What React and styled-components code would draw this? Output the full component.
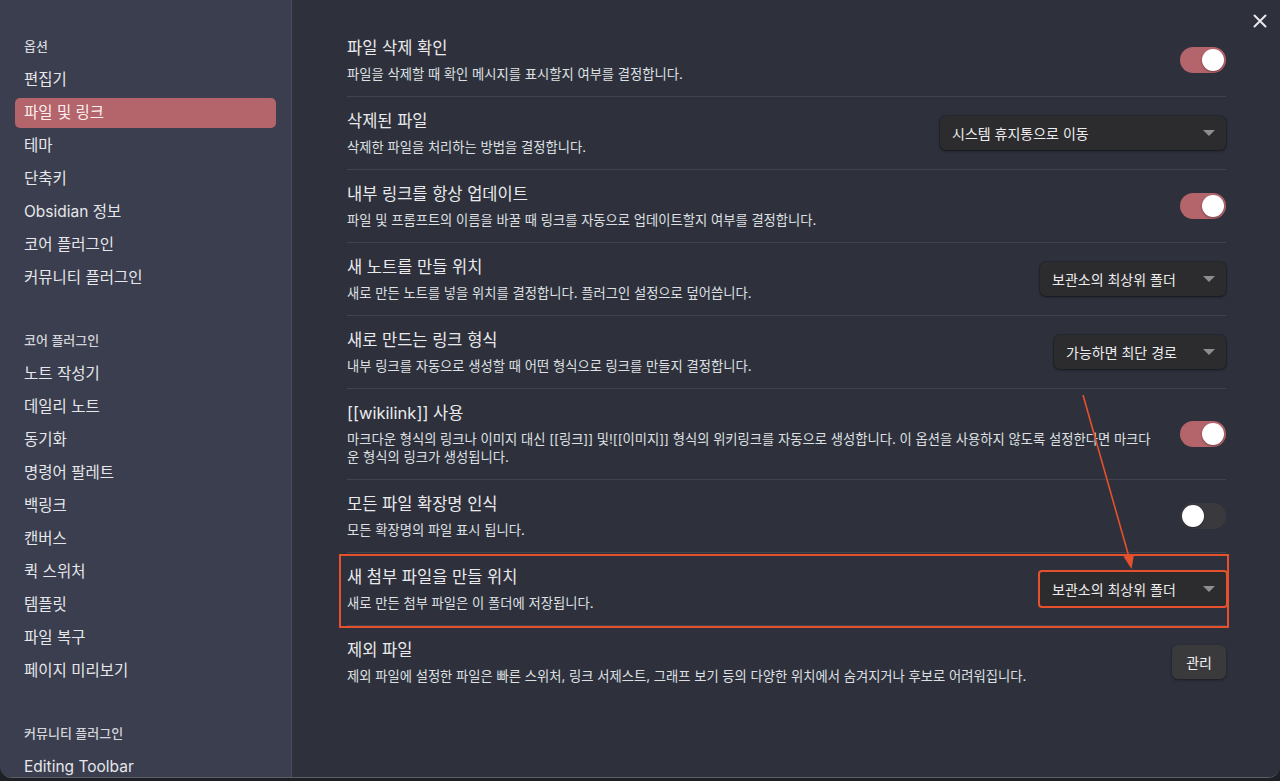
import React from "react";
import styled, { createGlobalStyle, css } from "styled-components";

const GlobalStyle = createGlobalStyle`
  html, body { margin: 0; padding: 0; background: #1f2025; }
  body {
    font-family: "Inter", "Noto Sans CJK KR", sans-serif;
    -webkit-font-smoothing: antialiased;
  }
  * { box-sizing: border-box; }
`;

const Stage = styled.div`
  position: relative;
  width: 1280px;
  height: 781px;
  overflow: hidden;
  background: #1f2025;
`;

const Window = styled.div`
  display: grid;
  grid-template-columns: 292px 1fr;
  width: 1280px;
  height: 778px;
  border-radius: 0 0 12px 12px;
  border-bottom: 1px solid #5c5e66;
  overflow: hidden;
  position: relative;
`;

const Sidebar = styled.nav`
  background: #3a3e4e;
  border-right: 1px solid #4a4e5d;
  padding: 34px 15px 0 15px;
  display: flex;
  flex-direction: column;
  overflow: hidden;
`;

const Group = styled.div`
  display: flex;
  flex-direction: column;
  gap: 3px;
  & + & { margin-top: 35px; }
`;

const GroupHeading = styled.div`
  font-size: 13px;
  line-height: 24px;
  padding-left: 9px;
  color: #d4d5da;
  font-weight: 500;
  margin-bottom: 4px;
`;

const NavItem = styled.div`
  height: 30px;
  line-height: 30px;
  padding-left: 9px;
  font-size: 15.5px;
  color: #e6e7ea;
  border-radius: 5px;
  white-space: nowrap;
  ${(p) =>
    p.$active &&
    css`
      background: #b4646b;
      color: #fbeeee;
    `}
`;

const Main = styled.main`
  background: #2e313c;
  padding: 24px 54px 0 55px;
  position: relative;
`;

const Row = styled.div`
  position: relative;
  display: flex;
  align-items: center;
  gap: 24px;
  padding: 12px 0 13px;
  & + & { border-top: 1px solid #41444f; }
`;

const Info = styled.div`
  flex: 1;
  min-width: 0;
`;

const Title = styled.div`
  font-size: 16.5px;
  line-height: 24px;
  color: #eaeaec;
`;

const Desc = styled.div`
  margin-top: 5px;
  font-size: 13.3px;
  line-height: 18px;
  color: #dfe0e3;
`;

const Toggle = styled.div`
  flex: none;
  width: 46px;
  height: 26px;
  border-radius: 13px;
  background: ${(p) => (p.$on ? "#b4646b" : "#3a3a3e")};
  position: relative;
  &::after {
    content: "";
    position: absolute;
    top: 2px;
    left: ${(p) => (p.$on ? "22px" : "2px")};
    width: 22px;
    height: 22px;
    border-radius: 50%;
    background: #ffffff;
    box-shadow: 0 1px 2px rgba(0, 0, 0, 0.35);
  }
`;

const Select = styled.div`
  flex: none;
  display: flex;
  align-items: center;
  justify-content: space-between;
  height: 34px;
  width: ${(p) => p.$w}px;
  padding: 0 11px 0 12px;
  border-radius: 6px;
  background: #2c2c2f;
  box-shadow: 0 1px 3px rgba(0, 0, 0, 0.45), 0 0 0 1px rgba(0, 0, 0, 0.15);
  font-size: 14px;
  color: #ececee;
  white-space: nowrap;
  ${(p) =>
    p.$marked &&
    css`
      box-shadow: none;
      border-radius: 2px;
      outline: 2px solid #e5502d;
      outline-offset: 0;
    `}
`;

const Caret = styled.span`
  width: 0;
  height: 0;
  border-left: 6px solid transparent;
  border-right: 6px solid transparent;
  border-top: 6px solid #8d8d92;
`;

const Button = styled.div`
  flex: none;
  height: 34px;
  padding: 0 14px;
  display: flex;
  align-items: center;
  border-radius: 6px;
  background: #3a3a3c;
  box-shadow: 0 1px 3px rgba(0, 0, 0, 0.45);
  font-size: 14px;
  color: #eeeeef;
`;

const HighlightBox = styled.div`
  position: absolute;
  top: 1px;
  bottom: -3px;
  left: -8px;
  right: -3px;
  border: 2px solid #e5502d;
  pointer-events: none;
`;

const Close = styled.div`
  position: absolute;
  top: 13px;
  right: 12px;
  width: 16px;
  height: 16px;
  color: #e8e8ea;
`;

const Overlay = styled.svg`
  position: absolute;
  left: 0;
  top: 0;
  pointer-events: none;
`;

const sections = [
  { heading: "옵션", items: ["편집기", "파일 및 링크", "테마", "단축키", "Obsidian 정보", "코어 플러그인", "커뮤니티 플러그인"], active: "파일 및 링크" },
  { heading: "코어 플러그인", items: ["노트 작성기", "데일리 노트", "동기화", "명령어 팔레트", "백링크", "캔버스", "퀵 스위처", "템플릿", "파일 복구", "페이지 미리보기"] },
  { heading: "커뮤니티 플러그인", items: ["Editing Toolbar"] },
];

const rows = [
  { title: "파일 삭제 확인", desc: "파일을 삭제할 때 확인 메시지를 표시할지 여부를 결정합니다.", control: { type: "toggle", on: true } },
  { title: "삭제된 파일", desc: "삭제한 파일을 처리하는 방법을 결정합니다.", control: { type: "select", value: "시스템 휴지통으로 이동", w: 286 } },
  { title: "내부 링크를 항상 업데이트", desc: "파일 및 프롬프트의 이름을 바꿀 때 링크를 자동으로 업데이트할지 여부를 결정합니다.", control: { type: "toggle", on: true } },
  { title: "새 노트를 만들 위치", desc: "새로 만든 노트를 넣을 위치를 결정합니다. 플러그인 설정으로 덮어씁니다.", control: { type: "select", value: "보관소의 최상위 폴더", w: 186 } },
  { title: "새로 만드는 링크 형식", desc: "내부 링크를 자동으로 생성할 때 어떤 형식으로 링크를 만들지 결정합니다.", control: { type: "select", value: "가능하면 최단 경로", w: 172 } },
  { title: "[[wikilink]] 사용", desc: "마크다운 형식의 링크나 이미지 대신 [[링크]] 및![[이미지]] 형식의 위키링크를 자동으로 생성합니다. 이 옵션을 사용하지 않도록 설정한다면 마크다운 형식의 링크가 생성됩니다.", control: { type: "toggle", on: true } },
  { title: "모든 파일 확장명 인식", desc: "모든 확장명의 파일 표시 됩니다.", control: { type: "toggle", on: false } },
  { title: "새 첨부 파일을 만들 위치", desc: "새로 만든 첨부 파일은 이 폴더에 저장됩니다.", control: { type: "select", value: "보관소의 최상위 폴더", w: 186, marked: true }, marked: true },
  { title: "제외 파일", desc: "제외 파일에 설정한 파일은 빠른 스위처, 링크 서제스트, 그래프 보기 등의 다양한 위치에서 숨겨지거나 후보로 어려워집니다.", control: { type: "button", label: "관리" } },
];

function Control({ c }) {
  if (c.type === "toggle") return <Toggle $on={c.on} />;
  if (c.type === "select")
    return (
      <Select $w={c.w} $marked={c.marked}>
        <span>{c.value}</span>
        <Caret />
      </Select>
    );
  return <Button>{c.label}</Button>;
}

export default function App() {
  return (
    <>
      <GlobalStyle />
      <Stage>
        <Window>
          <Sidebar>
            {sections.map((s) => (
              <Group key={s.heading}>
                <GroupHeading>{s.heading}</GroupHeading>
                {s.items.map((it) => (
                  <NavItem key={it} $active={it === s.active}>
                    {it}
                  </NavItem>
                ))}
              </Group>
            ))}
          </Sidebar>
          <Main>
            {rows.map((r) => (
              <Row key={r.title}>
                <Info>
                  <Title>{r.title}</Title>
                  <Desc>{r.desc}</Desc>
                </Info>
                <Control c={r.control} />
                {r.marked && <HighlightBox />}
              </Row>
            ))}
          </Main>
          <Close>
            <svg width="16" height="16" viewBox="0 0 16 16">
              <path d="M2.5 2.5 L13.5 13.5 M13.5 2.5 L2.5 13.5" stroke="currentColor" strokeWidth="2" strokeLinecap="round" />
            </svg>
          </Close>
        </Window>
        <Overlay width="1280" height="781" viewBox="0 0 1280 781">
          <line x1="1083" y1="395" x2="1129" y2="557" stroke="#e5502d" strokeWidth="1.6" />
          <path d="M1123.5 556.5 L1131.5 569 L1134 554.5 Z" fill="#e5502d" />
        </Overlay>
      </Stage>
    </>
  );
}
